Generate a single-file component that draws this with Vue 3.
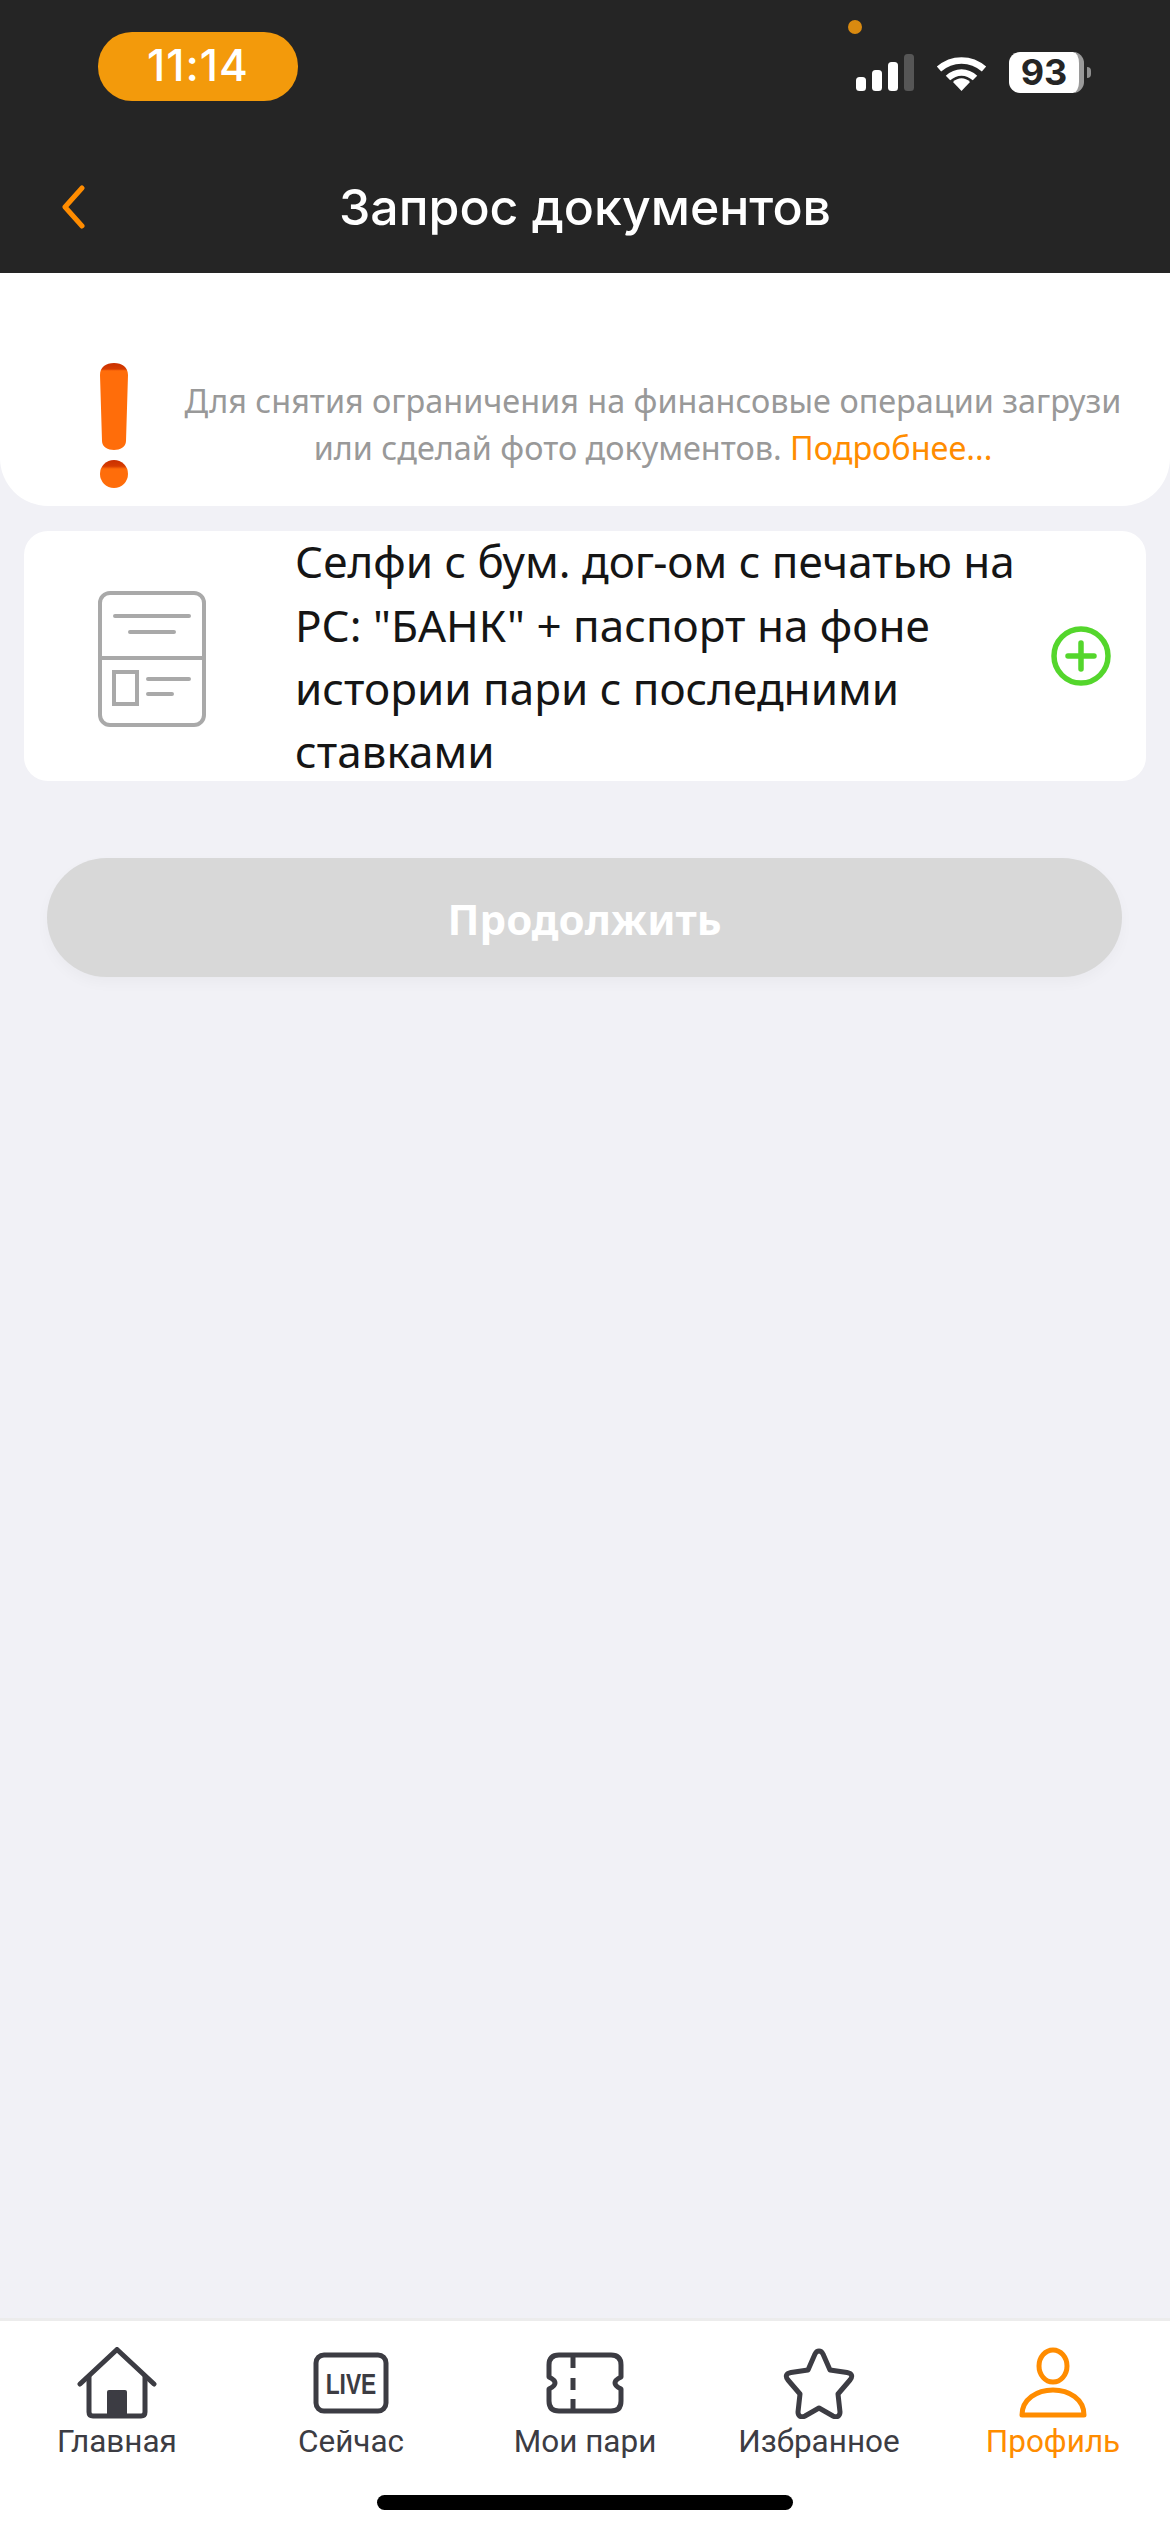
<script setup>
const tabs = [
  { label: 'Главная', icon: 'home' },
  { label: 'Сейчас', icon: 'live' },
  { label: 'Мои пари', icon: 'ticket' },
  { label: 'Избранное', icon: 'star' },
  { label: 'Профиль', icon: 'user', active: true }
]
</script>

<template>
  <div class="page">
    <header class="header">
      <div class="status">
        <div class="pill">11:14</div>
        <div class="status-right">
          <span class="rec-dot"></span>
          <div class="status-icons">
            <svg class="signal" width="58" height="37" viewBox="0 0 58 37">
              <rect x="0" y="23" width="10" height="14" rx="3.5" fill="#fff" />
              <rect x="16" y="16" width="10" height="21" rx="3.5" fill="#fff" />
              <rect x="32" y="8" width="10" height="29" rx="3.5" fill="#fff" />
              <rect x="48" y="0" width="10" height="37" rx="3.5" fill="#565656" />
            </svg>
            <svg class="wifi" width="51" height="37" viewBox="0 0 51 37">
              <path d="M3 15 C16 3.500 35 3.500 48 15" fill="none" stroke="#fff" stroke-width="6.500" stroke-linecap="butt" />
              <path d="M12 24 C20 16.500 31 16.500 39 24" fill="none" stroke="#fff" stroke-width="6.500" />
              <path d="M17 28 C22 23 29 23 34 28 L25.500 37 Z" fill="#fff" />
            </svg>
            <div class="battery">
              <div class="battery-body"><span>93</span></div>
              <span class="battery-cap"></span>
            </div>
          </div>
        </div>
      </div>
      <div class="nav">
        <svg class="back" width="26" height="44" viewBox="0 0 26 44">
          <path d="M22 3 L5 22 L22 41" fill="none" stroke="#ff8c00" stroke-width="5" stroke-linecap="round" stroke-linejoin="round" />
        </svg>
        <h1 class="title">Запрос документов</h1>
      </div>
    </header>

    <main class="main">
      <section class="notice">
        <svg class="mark" width="28" height="125" viewBox="0 0 28 125">
          <defs>
            <linearGradient id="markTop" x1="0" y1="0" x2="0" y2="1">
              <stop offset="0" stop-color="#c92f00" />
              <stop offset="0.07" stop-color="#d63c00" />
              <stop offset="0.09" stop-color="#ff6d0a" />
              <stop offset="1" stop-color="#ff6d0a" />
            </linearGradient>
            <linearGradient id="markDot" x1="0" y1="0" x2="0" y2="1">
              <stop offset="0" stop-color="#c92f00" />
              <stop offset="0.22" stop-color="#d63c00" />
              <stop offset="0.32" stop-color="#ff6d0a" />
              <stop offset="1" stop-color="#ff6d0a" />
            </linearGradient>
          </defs>
          <path d="M0 12 C0 4 6 0 14 0 C22 0 28 4 28 12 L26 78 C26 84 20 87 14 87 C8 87 2 84 2 78 Z" fill="url(#markTop)" />
          <circle cx="14" cy="111" r="14" fill="url(#markDot)" />
        </svg>
        <p class="notice-text">
          Для снятия ограничения на финансовые операции загрузи или сделай фото документов.
          <span class="more">Подробнее...</span>
        </p>
      </section>

      <section class="doc-card">
        <svg class="doc-icon" width="108" height="136" viewBox="0 0 108 136" fill="none" stroke="#a9a9a9" stroke-width="4">
          <rect x="2" y="2" width="104" height="132" rx="10" />
          <path d="M2 67 H106" />
          <path d="M17 25 H91 M32 41 H76 M50 88 H91 M50 103 H74" stroke-linecap="round" />
          <rect x="16" y="81" width="23" height="32" />
        </svg>
        <p class="doc-text">Селфи с бум. дог-ом с печатью на РС: "БАНК" + паспорт на фоне истории пари с последними ставками</p>
        <svg class="plus" width="60" height="60" viewBox="0 0 60 60" fill="none" stroke="#54d62c">
          <circle cx="30" cy="30" r="27" stroke-width="5.500" />
          <path d="M30 17 V43 M17 30 H43" stroke-width="5.500" stroke-linecap="round" />
        </svg>
      </section>

      <button class="continue" type="button">Продолжить</button>
    </main>

    <footer class="tabbar">
      <div class="tabs">
        <div v-for="tab in tabs" :key="tab.label" class="tab" :class="{ active: tab.active }">
          <svg class="tab-icon" width="80" height="72" viewBox="0 0 80 72" fill="none" stroke="currentColor" stroke-width="5" stroke-linecap="round" stroke-linejoin="round">
            <template v-if="tab.icon === 'home'">
              <path d="M3 37 L40 2.500 L77 37" />
              <path d="M12 30 V65 Q12 69 16 69 H64 Q68 69 68 65 V30" />
              <rect x="30" y="43" width="20" height="26" rx="2" fill="currentColor" stroke="none" />
            </template>
            <template v-else-if="tab.icon === 'live'">
              <rect x="5" y="8" width="70" height="56" rx="8" />
              <text class="live-text" transform="translate(40 47) scale(0.76 1)" text-anchor="middle">LIVE</text>
            </template>
            <template v-else-if="tab.icon === 'ticket'">
              <path d="M14 8 H66 Q76 8 76 18 V30 Q70 33 70 36 Q70 39 76 42 V54 Q76 64 66 64 H14 Q4 64 4 54 V42 Q10 39 10 36 Q10 33 4 30 V18 Q4 8 14 8 Z" />
              <path d="M28 10 V21 M28 31 V43 M28 52 V62" stroke-linecap="butt" />
            </template>
            <template v-else-if="tab.icon === 'star'">
              <path d="M40 4 C42 4 43 5 44 7 L51 23 L68 25.500 C73 26.500 74 29 71 33 L59 47 L61 65 C61 69 58 71 54 69 L40 61 L26 69 C22 71 19 69 19 65 L21 47 L9 33 C6 29 7 26.500 12 25.500 L29 23 L36 7 C37 5 38 4 40 4 Z" />
            </template>
            <template v-else>
              <ellipse cx="40" cy="19" rx="14" ry="16" />
              <path d="M9 68 C9 52 24 43 40 43 C56 43 71 52 71 68 Z" />
            </template>
          </svg>
          <span class="tab-label">{{ tab.label }}</span>
        </div>
      </div>
      <div class="indicator"></div>
    </footer>
  </div>
</template>

<style>
html, body { margin: 0; padding: 0; background: #f1f1f6; }
</style>

<style scoped>
.page {
  width: 1170px;
  height: 2532px;
  display: flex;
  flex-direction: column;
  background: #f1f1f6;
  overflow: hidden;
}
.header {
  height: 273px;
  background: #252525;
  flex: none;
  display: flex;
  flex-direction: column;
}
.status {
  height: 132px;
  display: flex;
  justify-content: space-between;
  padding: 32px 79px 0 98px;
  box-sizing: border-box;
}
.pill {
  width: 200px;
  height: 69px;
  border-radius: 34px;
  background: #f39a0b;
  color: #fff;
  font: 500 44px/67px Inter, "Liberation Sans", sans-serif;
  letter-spacing: 1px;
  text-align: center;
}
.status-right {
  display: flex;
  flex-direction: column;
  align-items: flex-start;
  margin-top: -12px;
}
.rec-dot {
  width: 14px;
  height: 14px;
  border-radius: 50%;
  background: #d98a10;
  margin-left: -8px;
}
.status-icons {
  display: flex;
  align-items: flex-end;
  margin-top: 18px;
}
.wifi { margin-left: 22px; }
.battery {
  margin-left: 22px;
  display: flex;
  align-items: center;
  margin-bottom: -2px;
}
.battery-body {
  width: 75px;
  height: 41px;
  box-sizing: border-box;
  border-radius: 11px;
  background: #fff;
  border-right: 5px solid #9a9a9a;
  color: #252525;
  font: 700 36px/41px Inter, "Liberation Sans", sans-serif;
  text-align: center;
}
.battery-cap {
  width: 4px;
  height: 11px;
  margin-left: 3px;
  background: #8f8f8f;
  border-radius: 0 6px 6px 0;
}
.nav {
  flex: 1;
  display: flex;
  align-items: center;
  justify-content: center;
  position: relative;
  padding-top: 8px;
}
.back {
  position: absolute;
  left: 60px;
  top: 50%;
  margin-top: -18px;
}
.title {
  margin: 0;
  color: #fff;
  font: 500 50px/60px Inter, Roboto, sans-serif;
}
.main {
  flex: 1;
  display: flex;
  flex-direction: column;
  min-height: 0;
}
.notice {
  height: 233px;
  background: #fff;
  border-radius: 0 0 48px 48px;
  display: flex;
  box-sizing: border-box;
  padding: 90px 40px 0 100px;
}
.mark { flex: none; }
.notice-text {
  margin: 14px 0 0 48px;
  flex: 1;
  color: #999;
  text-align: center;
  font: 400 32.400px/47px "Noto Sans", "Open Sans", sans-serif;
}
.more { color: #ff8c00; }
.doc-card {
  margin: 25px 24px 0;
  height: 250px;
  background: #fff;
  border-radius: 24px;
  display: flex;
  align-items: center;
  box-sizing: border-box;
  padding: 2px 35px 0 74px;
}
.doc-icon { flex: none; margin-top: 3px; }
.doc-text {
  margin: 0 0 0 89px;
  flex: 1;
  color: #151515;
  font: 400 44px/63.300px "Noto Sans", "Open Sans", sans-serif;
}
.plus { flex: none; margin-left: 16px; margin-top: -2px; }
.continue {
  margin: 77px 48px 0 47px;
  height: 119px;
  border: 0;
  border-radius: 60px;
  background: #d8d8d8;
  color: #fff;
  font: 700 42px/119px "Noto Sans", "Open Sans", sans-serif;
  box-shadow: 0 6px 14px rgba(0, 0, 0, 0.03);
}
.tabbar {
  flex: none;
  height: 214px;
  background: #fff;
  border-top: 3px solid #ececec;
  box-sizing: border-box;
}
.tabs {
  display: grid;
  grid-template-columns: repeat(5, 234px);
  padding-top: 26px;
}
.tab {
  display: flex;
  flex-direction: column;
  align-items: center;
  color: #3c3c43;
}
.tab.active { color: #ff8c00; }
.tab-icon { display: block; }
.tab-label {
  font: 400 31.500px/42px Roboto, "Liberation Sans", sans-serif;
  margin-top: 2px;
  white-space: nowrap;
}
.live-text {
  font: 700 30px "Liberation Sans", Arial, sans-serif;
  fill: currentColor;
  stroke: none;
}
.indicator {
  width: 416px;
  height: 15px;
  margin: 32px auto 0;
  background: #000;
  border-radius: 8px;
}
</style>
